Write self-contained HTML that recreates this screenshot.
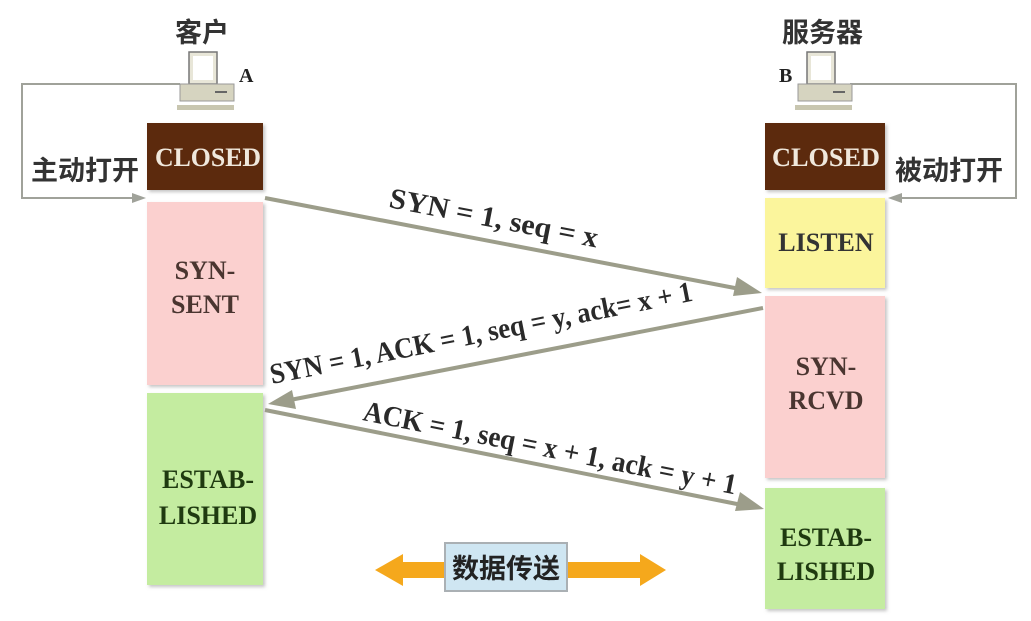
<!DOCTYPE html>
<html><head><meta charset="utf-8"><style>
html,body{margin:0;padding:0;background:#fff;width:1031px;height:621px;overflow:hidden}
svg text{font-family:"Liberation Serif","Noto Serif CJK SC",serif;font-weight:bold}
.cn{font-family:"Liberation Sans","Noto Sans CJK SC",sans-serif !important;font-weight:bold}
</style></head><body>
<svg width="1031" height="621" viewBox="0 0 1031 621" xmlns="http://www.w3.org/2000/svg">
<defs><filter id="sh"><feDropShadow dx="2" dy="2" stdDeviation="1.5" flood-color="#888" flood-opacity="0.5"/></filter></defs>
<polyline points="180,84 22,84 22,198 138,198" fill="none" stroke="#a0a29a" stroke-width="2"/>
<polygon points="146,198 132,193 132,203" fill="#a0a29a"/>
<polyline points="850,84 1016,84 1016,198 896,198" fill="none" stroke="#a0a29a" stroke-width="2"/>
<polygon points="888,198 902,193 902,203" fill="#a0a29a"/>
<g transform="translate(177,52)">
<rect x="12" y="0" width="28" height="32" fill="#e8e6d8" stroke="#777" stroke-width="1.5"/>
<rect x="16" y="4" width="20" height="24" fill="#fff"/>
<rect x="3" y="32" width="54" height="17" fill="#d6d4c0" stroke="#999"/>
<rect x="38" y="39" width="12" height="2" fill="#666"/>
<rect x="0" y="53" width="57" height="5" fill="#c8c6b0"/>
</g>
<g transform="translate(795,52)">
<rect x="12" y="0" width="28" height="32" fill="#e8e6d8" stroke="#777" stroke-width="1.5"/>
<rect x="16" y="4" width="20" height="24" fill="#fff"/>
<rect x="3" y="32" width="54" height="17" fill="#d6d4c0" stroke="#999"/>
<rect x="38" y="39" width="12" height="2" fill="#666"/>
<rect x="0" y="53" width="57" height="5" fill="#c8c6b0"/>
</g>
<text x="175" y="42" font-size="27" class="cn" fill="#333">客户</text>
<text x="782" y="42" font-size="27" class="cn" fill="#333">服务器</text>
<text x="239" y="82" font-size="20" fill="#222">A</text>
<text x="779" y="82" font-size="20" fill="#222">B</text>
<text x="31" y="180" font-size="27" class="cn" fill="#333">主动打开</text>
<text x="895" y="180" font-size="27" class="cn" fill="#333">被动打开</text>
<g filter="url(#sh)">
<rect x="147" y="123" width="116" height="67" fill="#5c2a0a"/>
<rect x="147" y="202" width="116" height="183" fill="#fbd0cf"/>
<rect x="147" y="393" width="116" height="192" fill="#c4eca0"/>
<rect x="765" y="123" width="120" height="67" fill="#5c2a0a"/>
<rect x="765" y="198" width="120" height="90" fill="#fbf59c"/>
<rect x="765" y="296" width="120" height="182" fill="#fbd0cf"/>
<rect x="765" y="488" width="120" height="121" fill="#c4eca0"/>
</g>
<g font-size="26" text-anchor="middle">
<text x="208" y="166" fill="#f0e8dc" textLength="106" lengthAdjust="spacingAndGlyphs">CLOSED</text>
<text x="826" y="166" fill="#f0e8dc" textLength="108" lengthAdjust="spacingAndGlyphs">CLOSED</text>
<text x="205" y="279" fill="#4a3530">SYN-</text>
<text x="205" y="313" fill="#4a3530">SENT</text>
<text x="208" y="488" fill="#1f3a10">ESTAB-</text>
<text x="208" y="524" fill="#1f3a10">LISHED</text>
<text x="826" y="251" fill="#333">LISTEN</text>
<text x="826" y="375" fill="#4a3530">SYN-</text>
<text x="826" y="409" fill="#4a3530">RCVD</text>
<text x="826" y="546" fill="#1f3a10">ESTAB-</text>
<text x="826" y="580" fill="#1f3a10">LISHED</text>
</g>
<g stroke="#9c9d8a" stroke-width="4">
<line x1="265" y1="198" x2="740" y2="289"/>
<line x1="763" y1="308" x2="290" y2="400"/>
<line x1="265" y1="410" x2="742" y2="505"/>
</g>
<g fill="#9c9d8a">
<polygon points="762,293 733,296 737,277"/>
<polygon points="268,404 292,390 296,409"/>
<polygon points="764,509 735,511 740,492"/>
</g>
<g font-size="29" fill="#2a2a2a" lengthAdjust="spacingAndGlyphs">
<text transform="translate(388,207) rotate(11)" textLength="212" lengthAdjust="spacingAndGlyphs">SYN = 1, seq = x</text>
<text transform="translate(272,384) rotate(-11.2)" textLength="430" lengthAdjust="spacingAndGlyphs">SYN = 1, ACK = 1, seq = y, ack= x + 1</text>
<text transform="translate(362,420) rotate(11.3)" textLength="380" lengthAdjust="spacingAndGlyphs">ACK = 1, seq = x + 1, ack = y + 1</text>
</g>
<polygon points="375,570 403,554 403,562 640,562 640,554 666,570 640,586 640,578 403,578 403,586" fill="#f5a81c"/>
<rect x="445" y="543" width="122" height="48" fill="#cfe6f2" stroke="#aab0b4" stroke-width="2"/>
<text x="506" y="578" font-size="27" class="cn" fill="#222" text-anchor="middle">数据传送</text>
</svg>
</body></html>
